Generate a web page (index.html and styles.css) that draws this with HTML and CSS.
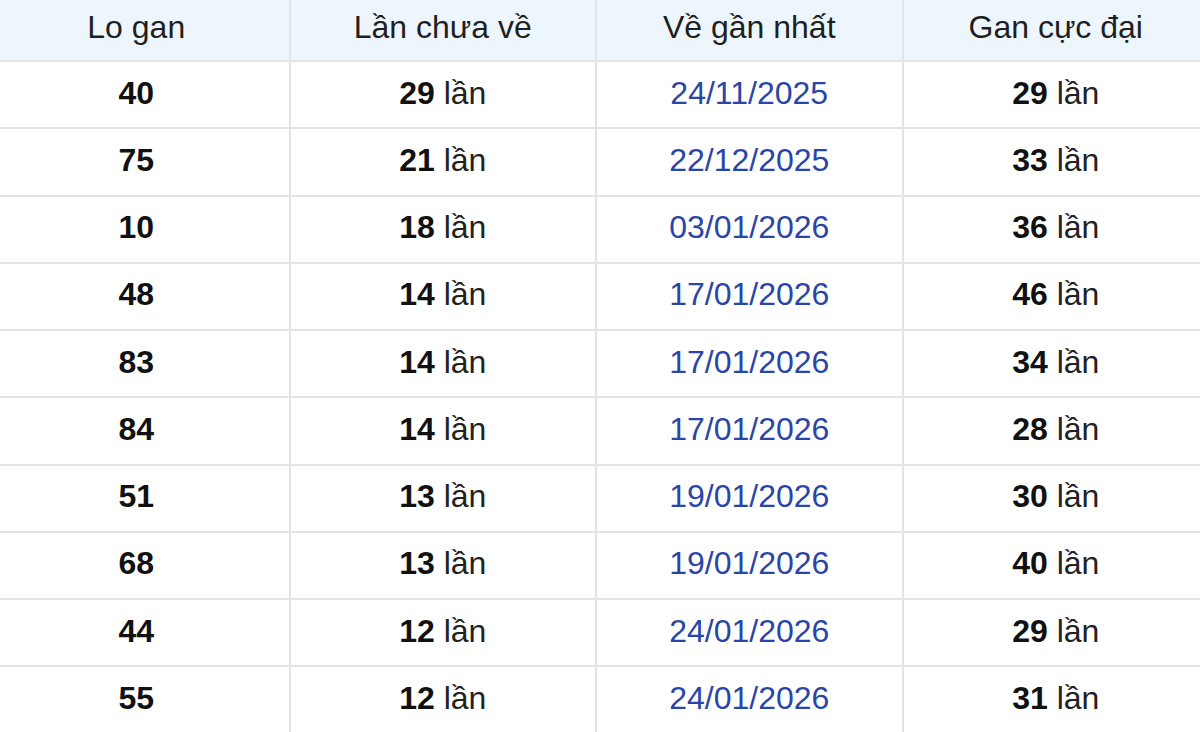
FILE: index.html
```html
<!DOCTYPE html>
<html lang="vi">
<head>
<meta charset="utf-8">
<title>Lo gan</title>
<link rel="stylesheet" href="styles.css">
</head>
<body>
<table class="gan-table">
  <colgroup><col><col><col><col></colgroup>
  <thead>
    <tr><th>Lo gan</th><th>Lần chưa về</th><th>Về gần nhất</th><th>Gan cực đại</th></tr>
  </thead>
  <tbody>
    <tr><td class="num">40</td><td><b>29</b> lần</td><td class="date">24/11/2025</td><td><b>29</b> lần</td></tr>
    <tr><td class="num">75</td><td><b>21</b> lần</td><td class="date">22/12/2025</td><td><b>33</b> lần</td></tr>
    <tr><td class="num">10</td><td><b>18</b> lần</td><td class="date">03/01/2026</td><td><b>36</b> lần</td></tr>
    <tr><td class="num">48</td><td><b>14</b> lần</td><td class="date">17/01/2026</td><td><b>46</b> lần</td></tr>
    <tr><td class="num">83</td><td><b>14</b> lần</td><td class="date">17/01/2026</td><td><b>34</b> lần</td></tr>
    <tr><td class="num">84</td><td><b>14</b> lần</td><td class="date">17/01/2026</td><td><b>28</b> lần</td></tr>
    <tr><td class="num">51</td><td><b>13</b> lần</td><td class="date">19/01/2026</td><td><b>30</b> lần</td></tr>
    <tr><td class="num">68</td><td><b>13</b> lần</td><td class="date">19/01/2026</td><td><b>40</b> lần</td></tr>
    <tr><td class="num">44</td><td><b>12</b> lần</td><td class="date">24/01/2026</td><td><b>29</b> lần</td></tr>
    <tr><td class="num">55</td><td><b>12</b> lần</td><td class="date">24/01/2026</td><td><b>31</b> lần</td></tr>
  </tbody>
</table>
</body>
</html>
```
FILE: styles.css
```css
html, body {
  margin: 0;
  padding: 0;
  background: #ffffff;
  overflow: hidden;
}
body {
  width: 1200px;
  height: 732px;
  font-family: "Liberation Sans", Arial, sans-serif;
}
.gan-table {
  margin-left: -18px;
  width: 1226px;
  border-collapse: collapse;
  table-layout: fixed;
  font-size: 32px;
  color: #222222;
}
.gan-table col {
  width: 306.5px;
}
.gan-table th,
.gan-table td {
  border: 2px solid #e4e4e4;
  text-align: center;
  vertical-align: middle;
}
.gan-table thead th {
  border-top: none;
  height: 54px;
  padding: 0 0 6px;
  font-weight: normal;
  background: #eef6fd;
  color: #1f1f1f;
}
.gan-table td {
  height: 62.25px;
  padding: 0 0 3px;
}
.gan-table b,
.gan-table .num {
  font-weight: bold;
  color: #111111;
}
.gan-table .date {
  color: #2a45a8;
}
```
